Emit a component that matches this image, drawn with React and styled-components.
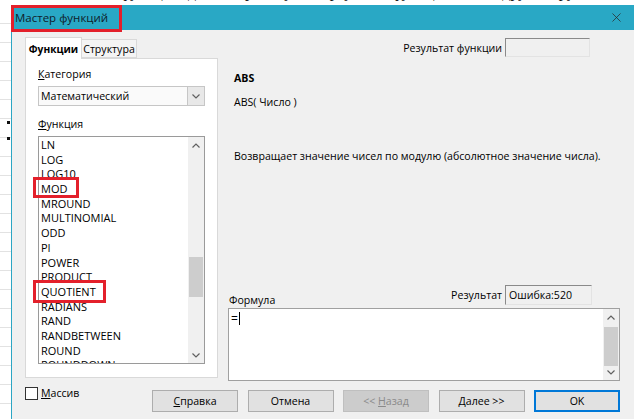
import React from 'react';
import styled, { createGlobalStyle, css } from 'styled-components';
import { X } from 'lucide-react';

const GlobalStyle = createGlobalStyle`
  html, body {
    margin: 0;
    padding: 0;
    background: #ffffff;
  }
  body {
    font-family: "Open Sans", "Noto Sans", "Liberation Sans", sans-serif;
    font-size: 10.6px;
    color: #000;
  }
`;

const RED = '#e3202b';

const redFrame = css`
  position: absolute;
  border: 3px solid ${RED};
  box-sizing: border-box;
  pointer-events: none;
`;

// ---------- page frame ----------

const Screen = styled.div`
  width: 634px;
  height: 419px;
  overflow: hidden;
  display: flex;
  flex-direction: column;
`;

const DocStrip = styled.div`
  height: 5px;
  overflow: hidden;
  padding-left: 120px;
  font-family: "Liberation Serif", serif;
  font-size: 16px;
  line-height: 16px;
  color: #111;
  white-space: nowrap;

  span {
    display: block;
    margin-top: -16px;
  }
`;

const Row = styled.div`
  flex: 1;
  display: flex;
  min-height: 0;
`;

const Gutter = styled.div`
  width: 11px;
  flex-shrink: 0;
  position: relative;
  background: repeating-linear-gradient(
    to bottom,
    #ffffff 0px,
    #ffffff 18px,
    #e2e2e2 18px,
    #e2e2e2 19px
  );
`;

const Mark = styled.div`
  position: absolute;
  right: 1px;
  top: ${(p) => p.top}px;
  width: 3px;
  height: 3px;
  background: #111;
`;

const Dialog = styled.div`
  flex: 1;
  display: flex;
  flex-direction: column;
  border-left: 1px solid #2ba6c4;
  background: #f0f0f0;
`;

const TitleBar = styled.div`
  height: 25px;
  flex-shrink: 0;
  background: #29a8c5;
  display: flex;
  align-items: center;
  justify-content: space-between;
  padding: 0 10px 0 3px;
`;

const TitleText = styled.div`
  position: relative;
  height: 100%;
  display: flex;
  align-items: center;
  font-size: 11.5px;
  color: #10202a;

  &::after {
    content: '';
    ${redFrame};
    top: 0;
    bottom: -2px;
    left: -4px;
    right: -14px;
  }
`;

const CloseBtn = styled.div`
  display: flex;
  align-items: center;
  color: #2a2a2a;
`;

const Body = styled.div`
  flex: 1;
  display: flex;
  flex-direction: column;
  padding: 6px 14px 0 13px;
`;

const Main = styled.div`
  display: grid;
  grid-template-columns: 193px 1fr;
  column-gap: 10px;
`;

// ---------- left: tabs ----------

const LeftCol = styled.div`
  display: flex;
  flex-direction: column;
`;

const TabRow = styled.div`
  display: flex;
  align-items: flex-end;
  height: 22px;
`;

const Tab = styled.div`
  height: ${(p) => (p.active ? 22 : 19)}px;
  width: ${(p) => p.w}px;
  display: flex;
  align-items: center;
  justify-content: center;
  border: 1px solid #d9d9d9;
  border-bottom: ${(p) => (p.active ? 'none' : '1px solid #d9d9d9')};
  border-left: ${(p) => (p.active ? '1px solid #d9d9d9' : 'none')};
  background: ${(p) => (p.active ? '#ffffff' : '#f4f4f4')};
  font-weight: ${(p) => (p.active ? 700 : 400)};
  font-size: ${(p) => (p.active ? 10.2 : 10.6)}px;
  margin-bottom: ${(p) => (p.active ? -1 : 0)}px;
  position: relative;
  z-index: ${(p) => (p.active ? 1 : 0)};
  box-sizing: border-box;
  white-space: nowrap;
`;

const Panel = styled.div`
  height: 320px;
  box-sizing: border-box;
  border: 1px solid #d9d9d9;
  background: #ffffff;
  padding: 8px 12px 0 12px;
  display: flex;
  flex-direction: column;
`;

const FieldLabel = styled.div`
  line-height: 14px;
  height: 14px;
  margin-top: ${(p) => p.mt || 0}px;
`;

const Combo = styled.div`
  margin-top: 5px;
  height: 20px;
  box-sizing: border-box;
  border: 1px solid #c6c6c6;
  background: #fafafa;
  display: flex;
  align-items: stretch;
`;

const ComboText = styled.div`
  flex: 1;
  display: flex;
  align-items: center;
  padding-left: 2px;
`;

const ComboButton = styled.div`
  width: 16px;
  border-left: 1px solid #c6c6c6;
  background: #e8e8e8;
  display: flex;
  align-items: center;
  justify-content: center;
`;

const ListBox = styled.div`
  position: relative;
  margin-top: 5px;
  height: 228px;
  box-sizing: border-box;
  border: 1px solid #9a9a9a;
  background: #fff;
  display: flex;
`;

const ListItems = styled.div`
  flex: 1;
  overflow: hidden;
  padding: 1px 0 0 2px;
`;

const ListItem = styled.div`
  height: 14.7px;
  line-height: 14.7px;
  font-size: 11px;
  white-space: nowrap;
`;

// red annotation frame drawn over the list
const Highlight = styled.div`
  ${redFrame};
  left: -6px;
  top: ${(p) => p.top}px;
  width: ${(p) => p.w}px;
  height: ${(p) => p.h}px;
`;

const ScrollBar = styled.div`
  width: 16px;
  flex-shrink: 0;
  background: #f0f0f0;
  display: flex;
  flex-direction: column;
  align-items: center;
`;

const ScrollArrow = styled.div`
  height: 16px;
  width: 100%;
  display: flex;
  align-items: center;
  justify-content: center;
`;

const ScrollTrack = styled.div`
  flex: 1;
  width: 100%;
  position: relative;
`;

const Thumb = styled.div`
  position: absolute;
  left: 1px;
  right: 1px;
  top: ${(p) => p.top}px;
  height: ${(p) => p.h}px;
  background: #cdcdcd;
`;

// ---------- right column ----------

const RightCol = styled.div`
  display: flex;
  flex-direction: column;
  height: 345px;
`;

const ResultRow = styled.div`
  display: flex;
  align-items: ${(p) => p.align || 'center'};
  justify-content: ${(p) => p.justify || 'space-between'};
  padding-right: ${(p) => p.pr}px;
  margin-top: ${(p) => p.mt || 0}px;
`;

const Spacer = styled.div`
  flex: 1;
`;

const Labeled = styled.div`
  display: flex;
  align-items: center;
  gap: 3px;
`;

const Sunken = styled.div`
  width: ${(p) => p.w}px;
  height: ${(p) => p.h}px;
  box-sizing: border-box;
  border: 1px solid #e3e3e3;
  border-top-color: #8a8a8a;
  border-left-color: #8a8a8a;
  background: #f0f0f0;
  display: flex;
  align-items: center;
  padding-left: 3px;
`;

const Info = styled.div`
  padding-left: 6px;
  line-height: 14px;
  margin-top: ${(p) => p.mt}px;
  font-weight: ${(p) => (p.bold ? 700 : 400)};
`;

const FormulaLabel = styled.div`
  padding-left: 1px;
  line-height: 14px;
  margin-bottom: -2px;
`;

const TextArea = styled.div`
  margin-top: 3px;
  height: 73px;
  box-sizing: border-box;
  border: 1px solid #a0a0a0;
  background: #fff;
  display: flex;
`;

const TextContent = styled.div`
  flex: 1;
  padding: 2px 0 0 2px;
  display: flex;
  align-items: flex-start;
  font-size: 12px;
  line-height: 15px;
`;

const Caret = styled.span`
  display: inline-block;
  width: 1.5px;
  height: 13px;
  background: #000;
  margin-top: 1px;
  margin-left: 1px;
`;

// ---------- footer ----------

const Footer = styled.div`
  display: flex;
  align-items: flex-start;
  justify-content: space-between;
  padding-top: 6px;
`;

const CheckLabel = styled.label`
  display: flex;
  align-items: center;
  gap: 3px;
  line-height: 13px;
`;

const CheckBox = styled.span`
  width: 13px;
  height: 13px;
  box-sizing: border-box;
  border: 1px solid #333;
  background: #fff;
`;

const Buttons = styled.div`
  display: flex;
  gap: 9.5px;
  margin-top: 3px;
`;

const Button = styled.div`
  width: 86px;
  height: 22px;
  box-sizing: border-box;
  display: flex;
  align-items: center;
  justify-content: center;
  background: ${(p) => (p.disabled ? '#cccccc' : '#e1e1e1')};
  border: ${(p) => (p.primary ? '2px solid #0078d7' : '1px solid #adadad')};
  border-color: ${(p) => (p.disabled ? '#bfbfbf' : undefined)};
  color: ${(p) => (p.disabled ? '#8a8a8a' : '#000')};
`;

const Chevron = ({ up }) => (
  <svg width="8" height="5" viewBox="0 0 8 5">
    <polyline
      points={up ? '0.5,4.5 4,1 7.5,4.5' : '0.5,0.5 4,4 7.5,0.5'}
      fill="none"
      stroke="#606060"
      strokeWidth="1.2"
    />
  </svg>
);

const functions = [
  'LN',
  'LOG',
  'LOG10',
  'MOD',
  'MROUND',
  'MULTINOMIAL',
  'ODD',
  'PI',
  'POWER',
  'PRODUCT',
  'QUOTIENT',
  'RADIANS',
  'RAND',
  'RANDBETWEEN',
  'ROUND',
  'ROUNDDOWN',
];

const App = () => {
  return (
    <>
      <GlobalStyle />
      <Screen>
        <DocStrip>
          <span>функции, для которых нужен аргумент, функция ABS и другие группы</span>
        </DocStrip>
        <Row>
          <Gutter>
            <Mark top={116} />
            <Mark top={132} />
          </Gutter>
          <Dialog>
            <TitleBar>
              <TitleText>Мастер функций</TitleText>
              <CloseBtn>
                <X size={15} strokeWidth={1.2} />
              </CloseBtn>
            </TitleBar>
            <Body>
              <Main>
                <LeftCol>
                  <TabRow>
                    <Tab active w={57}>Функции</Tab>
                    <Tab w={55}>Структура</Tab>
                  </TabRow>
                  <Panel>
                    <FieldLabel>
                      <u>К</u>атегория
                    </FieldLabel>
                    <Combo>
                      <ComboText>Математический</ComboText>
                      <ComboButton>
                        <Chevron />
                      </ComboButton>
                    </Combo>
                    <FieldLabel mt={11}>
                      <u>Ф</u>ункция
                    </FieldLabel>
                    <ListBox>
                      <ListItems>
                        {functions.map((name) => (
                          <ListItem key={name}>{name}</ListItem>
                        ))}
                      </ListItems>
                      <ScrollBar>
                        <ScrollArrow>
                          <Chevron up />
                        </ScrollArrow>
                        <ScrollTrack>
                          <Thumb top={104} h={40} />
                        </ScrollTrack>
                        <ScrollArrow>
                          <Chevron />
                        </ScrollArrow>
                      </ScrollBar>
                      <Highlight top={40} w={46} h={21} />
                      <Highlight top={143} w={73} h={23} />
                    </ListBox>
                  </Panel>
                </LeftCol>

                <RightCol>
                  <ResultRow pr={30} mt={2} justify="flex-end">
                    <Labeled>
                      <span>Результат функции</span>
                      <Sunken w={85} h={19} />
                    </Labeled>
                  </ResultRow>
                  <Info bold mt={14}>ABS</Info>
                  <Info mt={10}>ABS( Число )</Info>
                  <Info mt={40}>
                    Возвращает значение чисел по модулю (абсолютное значение числа).
                  </Info>
                  <Spacer />
                  <ResultRow pr={28} align="flex-end">
                    <FormulaLabel>Формула</FormulaLabel>
                    <Labeled>
                      <span>Результат</span>
                      <Sunken w={87} h={20}>Ошибка:520</Sunken>
                    </Labeled>
                  </ResultRow>
                  <TextArea>
                    <TextContent>
                      =<Caret />
                    </TextContent>
                    <ScrollBar>
                      <ScrollArrow>
                        <Chevron up />
                      </ScrollArrow>
                      <ScrollTrack>
                        <Thumb top={2} h={39} />
                      </ScrollTrack>
                      <ScrollArrow>
                        <Chevron />
                      </ScrollArrow>
                    </ScrollBar>
                  </TextArea>
                </RightCol>
              </Main>

              <Footer>
                <CheckLabel>
                  <CheckBox />
                  <span>
                    <u>М</u>ассив
                  </span>
                </CheckLabel>
                <Buttons>
                  <Button>
                    <span>
                      <u>С</u>правка
                    </span>
                  </Button>
                  <Button>Отмена</Button>
                  <Button disabled>
                    <span>
                      &lt;&lt; <u>Н</u>азад
                    </span>
                  </Button>
                  <Button>
                    <span>
                      <u>Д</u>алее &gt;&gt;
                    </span>
                  </Button>
                  <Button primary>OK</Button>
                </Buttons>
              </Footer>
            </Body>
          </Dialog>
        </Row>
      </Screen>
    </>
  );
};

export default App;
